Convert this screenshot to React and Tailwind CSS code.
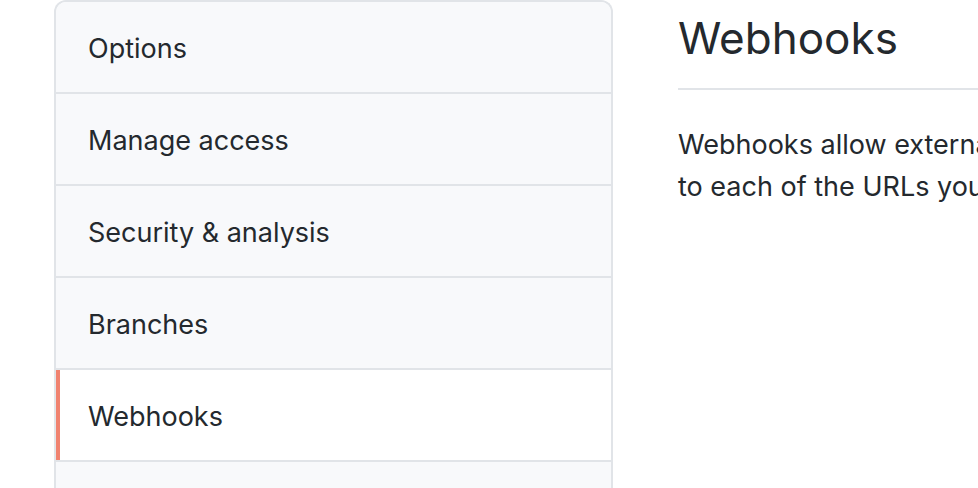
const items = [
  { label: 'Options' },
  { label: 'Manage access' },
  { label: 'Security & analysis' },
  { label: 'Branches' },
  { label: 'Webhooks', active: true },
  { label: 'Notifications' },
];

const App = () => {
  return (
    <div
      className="w-[978px] h-[488px] overflow-hidden bg-white text-[#24292e]"
      style={{ fontFamily: 'Inter, "Noto Sans", sans-serif' }}
    >
      <div className="flex pl-[54px] gap-[65px]">
        {/* Settings menu */}
        <nav className="w-[559px] shrink-0 border-2 border-b-0 border-[#e1e4e8] rounded-t-[12px] overflow-hidden">
          {items.map((item) => (
            <div
              key={item.label}
              className={
                (item.active ? 'bg-white ' : 'bg-[#f8f9fb] ') +
                'relative h-[92px] border-b-2 border-[#e1e4e8] flex items-center pt-[4px] pl-[32px] text-[27px] leading-[42px]'
              }
            >
              {item.active && (
                <span className="absolute left-0 top-0 bottom-0 w-[4px] bg-[#f0826f]" />
              )}
              {item.label}
            </div>
          ))}
        </nav>

        {/* Content */}
        <div className="shrink-0">
          <div className="pt-[8px] pb-[20px] border-b-2 border-[#e1e4e8]">
            <h2 className="text-[44px] leading-[60px] font-normal">Webhooks</h2>
          </div>
          <p className="mt-[34px] text-[27px] leading-[42px] whitespace-nowrap">
            Webhooks allow external services to be notified when certain events happen. When the specified events happen, we’ll send a POST request
            <br />
            to each of the URLs you provide. Learn more in our Webhooks Guide.
          </p>
        </div>
      </div>
    </div>
  );
};

export default App;
